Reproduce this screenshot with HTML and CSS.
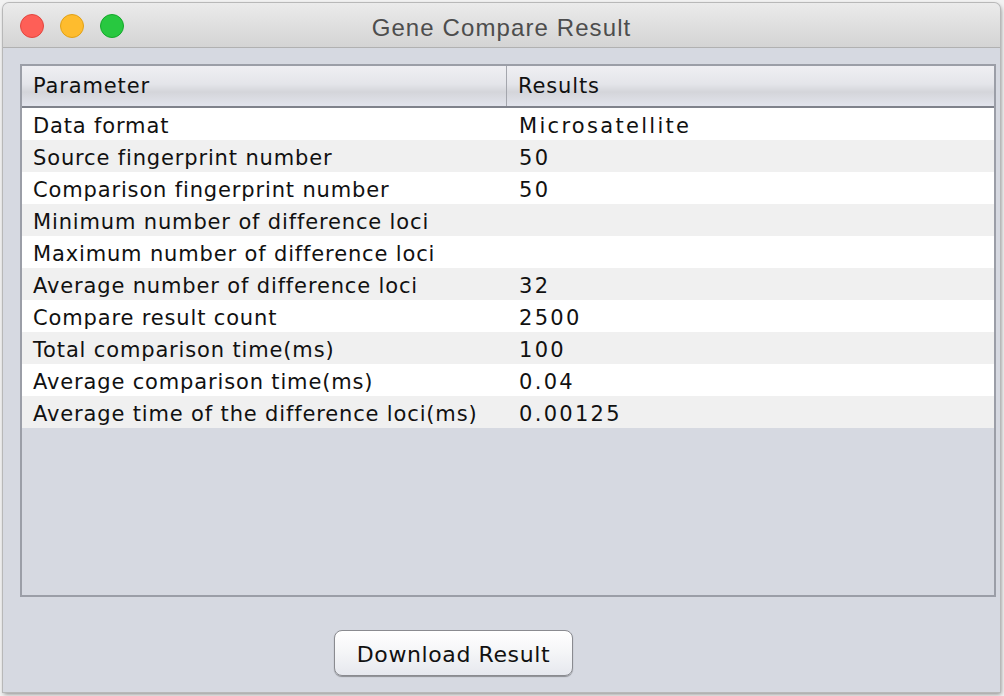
FILE: index.html
```html
<!DOCTYPE html>
<html>
<head>
<meta charset="utf-8">
<link rel="stylesheet" href="styles.css">
<title>Gene Compare Result</title>
</head>
<body>
<div class="window">
  <div class="titlebar">
    <div class="lights">
      <span class="light red"></span>
      <span class="light yellow"></span>
      <span class="light green"></span>
    </div>
    <div class="title">Gene Compare Result</div>
  </div>
  <div class="content">
    <div class="table">
      <div class="thead">
        <div class="th col1">Parameter</div>
        <div class="th col2">Results</div>
      </div>
      <div class="row"><div class="td col1">Data format</div><div class="td col2">Microsatellite</div></div>
      <div class="row alt"><div class="td col1">Source fingerprint number</div><div class="td col2">50</div></div>
      <div class="row"><div class="td col1">Comparison fingerprint number</div><div class="td col2">50</div></div>
      <div class="row alt"><div class="td col1">Minimum number of difference loci</div><div class="td col2"></div></div>
      <div class="row"><div class="td col1">Maximum number of difference loci</div><div class="td col2"></div></div>
      <div class="row alt"><div class="td col1">Average number of difference loci</div><div class="td col2">32</div></div>
      <div class="row"><div class="td col1">Compare result count</div><div class="td col2">2500</div></div>
      <div class="row alt"><div class="td col1">Total comparison time(ms)</div><div class="td col2">100</div></div>
      <div class="row"><div class="td col1">Average comparison time(ms)</div><div class="td col2">0.04</div></div>
      <div class="row alt"><div class="td col1">Average time of the difference loci(ms)</div><div class="td col2">0.00125</div></div>
    </div>
    <div class="actions">
      <button class="btn">Download Result</button>
    </div>
  </div>
</div>
</body>
</html>
```

FILE: styles.css
```css
* { box-sizing: border-box; }
html, body { margin: 0; padding: 0; }
body {
  width: 1004px;
  height: 696px;
  background: #f2f2f2;
  padding: 3px 4px 0 3px;
  overflow: hidden;
  font-family: "DejaVu Sans", "Liberation Sans", sans-serif;
}
.window {
  width: 997px;
  height: 689px;
  border-radius: 6px 6px 0 0;
  background: #d6d9e1;
  box-shadow: 0 0 0 1px #b8b8b8, 1px 2px 4px rgba(0,0,0,0.45);
  display: flex;
  flex-direction: column;
  overflow: hidden;
}
.titlebar {
  height: 45px;
  flex: none;
  background: linear-gradient(#ebebeb, #d4d4d4);
  border-bottom: 1px solid #b1b1b1;
  display: flex;
  align-items: center;
  position: relative;
}
.lights {
  display: flex;
  gap: 16px;
  padding-left: 17px;
  padding-top: 2px;
}
.light {
  width: 24px;
  height: 24px;
  border-radius: 50%;
  display: block;
}
.red { background: #fe5f57; border: 1px solid #e2463f; }
.yellow { background: #febc2e; border: 1px solid #e1a116; }
.green { background: #28c840; border: 1px solid #14a82a; }
.title {
  position: absolute;
  left: 0; right: 0; top: 0; bottom: 0;
  display: flex;
  align-items: center;
  justify-content: center;
  font-family: "Liberation Sans", sans-serif;
  font-size: 24px;
  letter-spacing: 1.1px;
  color: #4d4d4d;
  padding-top: 5px;
}
.content {
  flex: 1;
  display: flex;
  flex-direction: column;
  padding: 16px 4px 0 17px;
}
.table {
  height: 533px;
  border: 2px solid #9b9ea7;
  background: #d6d9e1;
}
.thead {
  height: 42px;
  display: flex;
  background: linear-gradient(#efeff3 0%, #e4e5ea 45%, #d4d5da 65%, #e2e4ec 100%);
  border-bottom: 2px solid #7f828b;
}
.th {
  font-size: 21px;
  letter-spacing: 0.85px;
  color: #111;
  display: flex;
  align-items: center;
  padding-left: 11px;
}
.col1 { width: 485px; flex: none; }
.col2 { flex: 1; }
.th.col1 { border-right: 1px solid #a4a6ad; }
.th.col2 { padding-left: 11px; }
.row {
  height: 32px;
  display: flex;
  background: #ffffff;
}
.row.alt { background: #f0f0f0; }
.td {
  font-size: 21px;
  letter-spacing: 0.85px;
  color: #111;
  display: flex;
  align-items: center;
  padding-left: 11px;
  padding-top: 3px;
}
.td.col2 { padding-left: 12px; letter-spacing: 2.3px; }
.actions {
  display: flex;
  padding-left: 314px;
  padding-top: 33px;
}
.btn {
  width: 239px;
  height: 46px;
  border: 1px solid #8a8b90;
  border-radius: 8px;
  background: linear-gradient(#ffffff 0%, #f4f5f7 50%, #e6e8ee 100%);
  box-shadow: 0 1px 1px rgba(0,0,0,0.35);
  font-family: "DejaVu Sans", sans-serif;
  font-size: 22px;
  letter-spacing: 0.6px;
  color: #111;
  padding: 3px 0 0 0;
}
```
